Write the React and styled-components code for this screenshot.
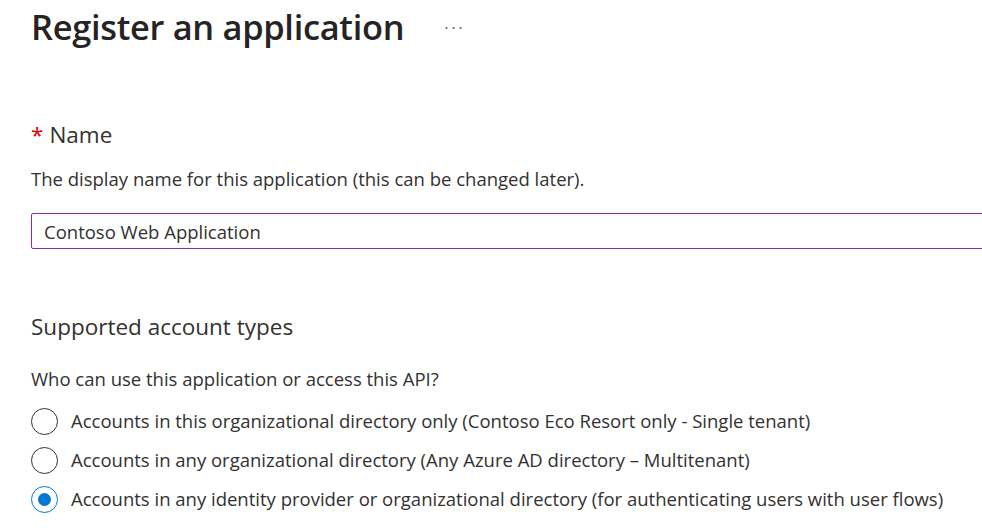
import styled, { createGlobalStyle } from "styled-components";

const Global = createGlobalStyle`
    html, body {
        margin: 0;
        padding: 0;
        background: #fff;
        overflow: hidden;
    }
    body {
        font-family: "Open Sans", "Noto Sans", sans-serif;
        color: #323130;
    }
`

const Page = styled.div`
    width: 982px;
    height: 532px;
    padding: 0 0 0 31px;
    box-sizing: border-box;
    overflow: hidden;
`

const Header = styled.header`
    display: flex;
    align-items: center;
    height: 54px;
    gap: 40px;
`

const Title = styled.h1`
    margin: 0;
    font-size: 34.4px;
    line-height: 46px;
    font-weight: 600;
    letter-spacing: -0.3px;
    color: #252423;
`

const More = styled.span`
    font-size: 16px;
    color: #605e5c;
    letter-spacing: 3px;
    margin-top: 2px;
`

const Section = styled.section`
    margin-top: ${(p) => p.top}px;
`

const Label = styled.h2`
    margin: 0;
    font-size: 22.5px;
    line-height: 30px;
    font-weight: 400;
    color: #323130;
`

const Star = styled.span`
    color: #e50000;
    margin-right: 6px;
`

const Help = styled.p`
    margin: ${(p) => p.top}px 0 0;
    font-size: 18.5px;
    line-height: 24px;
    color: #323130;
`

const Input = styled.input`
    display: block;
    margin-top: 22px;
    width: 970px;
    height: 36px;
    box-sizing: border-box;
    border: 1px solid #8a2aa6;
    border-radius: 2px;
    padding: 0 12px;
    font-family: inherit;
    font-size: 18.5px;
    color: #323130;
    outline: none;
`

const Options = styled.div`
    display: flex;
    flex-direction: column;
    gap: 11px;
    margin-top: 16px;
`

const Option = styled.label`
    display: flex;
    align-items: center;
    gap: 13px;
    font-size: 18.5px;
    line-height: 24px;
    height: 28px;
`

const Radio = styled.span`
    width: 27px;
    height: 27px;
    box-sizing: border-box;
    border-radius: 50%;
    border: 1px solid ${(p) => (p.checked ? "#0078d4" : "#323130")};
    display: flex;
    align-items: center;
    justify-content: center;
    flex-shrink: 0;

    &::after {
        content: "";
        display: ${(p) => (p.checked ? "block" : "none")};
        width: 13px;
        height: 13px;
        border-radius: 50%;
        background: #0078d4;
    }
`

const accountTypes = [
    "Accounts in this organizational directory only (Contoso Eco Resort only - Single tenant)",
    "Accounts in any organizational directory (Any Azure AD directory \u2013 Multitenant)",
    "Accounts in any identity provider or organizational directory (for authenticating users with user flows)",
]

const App = () => {
    return (
        <Page>
            <Global />
            <Header>
                <Title>Register an application</Title>
                <More>···</More>
            </Header>
            <Section top={66}>
                <Label><Star>*</Star>Name</Label>
                <Help top={17}>The display name for this application (this can be changed later).</Help>
                <Input defaultValue="Contoso Web Application" />
            </Section>
            <Section top={63}>
                <Label>Supported account types</Label>
                <Help top={25}>Who can use this application or access this API?</Help>
                <Options>
                    {accountTypes.map((text, id) => (
                        <Option key={id}>
                            <Radio checked={id === 2} />
                            {text}
                        </Option>
                    ))}
                </Options>
            </Section>
        </Page>
    );
}

export default App;
